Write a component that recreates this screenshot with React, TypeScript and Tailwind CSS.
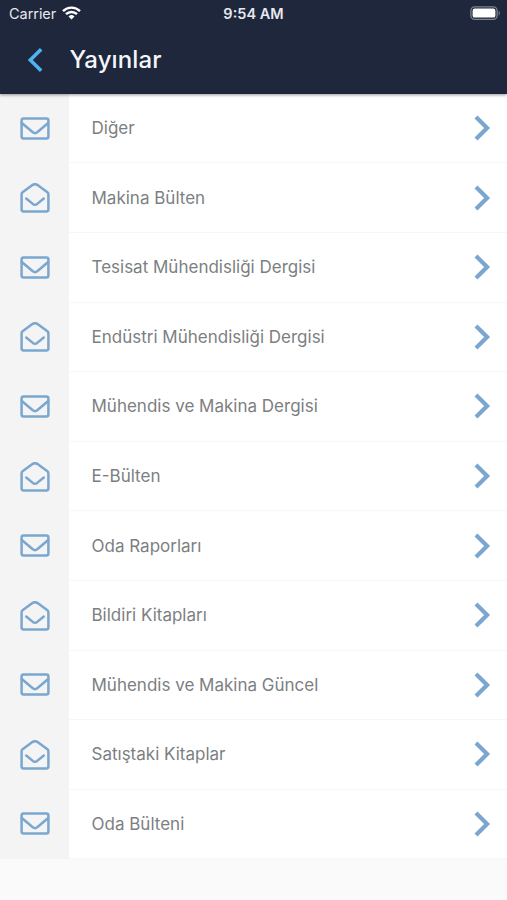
import { useState } from "react"

const publications = [
  { id: 1, title: "Diğer" },
  { id: 2, title: "Makina Bülten" },
  { id: 3, title: "Tesisat Mühendisliği Dergisi" },
  { id: 4, title: "Endüstri Mühendisliği Dergisi" },
  { id: 5, title: "Mühendis ve Makina Dergisi" },
  { id: 6, title: "E-Bülten" },
  { id: 7, title: "Oda Raporları" },
  { id: 8, title: "Bildiri Kitapları" },
  { id: 9, title: "Mühendis ve Makina Güncel" },
  { id: 10, title: "Satıştaki Kitaplar" },
  { id: 11, title: "Oda Bülteni" },
]

function EnvelopeIcon({ open }: { open: boolean }) {
  return (
    <svg width="30" height="30" viewBox="0 0 30 30" fill="none" stroke="#7aa6cf" strokeWidth="2.5" strokeLinecap="round" strokeLinejoin="round">
      {open ? (
        <>
          <path d="M1.6 11.4c0-.9.3-1.6 1-2.1l9.8-7.2c1.8-1.2 3.4-1.2 5.2 0l9.8 7.2c.7.5 1 1.2 1 2.1v15.1c0 1.2-.7 1.9-1.9 1.9h-23c-1.2 0-1.9-.7-1.9-1.9z" />
          <path d="M6.2 15.5l6.6 5.4c1.6 1.2 2.8 1.2 4.4 0l6.6-5.4" />
        </>
      ) : (
        <>
          <rect x="1.6" y="4.4" width="26.8" height="20" rx="2" />
          <path d="M1.8 9l11 9.3c1.7 1.3 2.7 1.3 4.4 0l11-9.3" />
        </>
      )}
    </svg>
  )
}

function StatusBar() {
  return (
    <div className="grid h-7 grid-cols-3 items-center pl-[9px] pr-[6px] text-[#e6e9f0]">
      <div className="flex items-center gap-[6px] text-[14.5px] tracking-[-0.05px]">
        <span>Carrier</span>
        <svg className="-mt-[2px]" width="19" height="14" viewBox="0 0 19 14" fill="none" stroke="#fff" strokeWidth="2.4">
          <path d="M1 5.1a12.2 12.2 0 0 1 17 0" />
          <path d="M4 8.2a7.8 7.8 0 0 1 11 0" />
          <path d="M9.5 13.6L6.5 10.5a4.3 4.3 0 0 1 6 0z" fill="#fff" stroke="none" />
        </svg>
      </div>
      <span className="pr-[3px] text-center text-[14.5px] font-semibold">9:54 AM</span>
      <svg className="-mt-[2px] justify-self-end" width="31" height="15" viewBox="0 0 31 15">
        <rect x="0.9" y="0.9" width="26.2" height="12.4" rx="3.8" fill="none" stroke="#7d8390" strokeWidth="1.3" />
        <rect x="2.6" y="2.6" width="22.8" height="9" rx="2.2" fill="#fff" />
        <path d="M28.6 5v4.4c1.6-.6 1.6-3.8 0-4.4z" fill="#7d8390" />
      </svg>
    </div>
  )
}

export default function App() {
  const [selected, setSelected] = useState<number | null>(null)

  return (
    <div className="flex h-[900px] w-[507px] flex-col overflow-hidden bg-[#fafafa] font-['Inter','Liberation_Sans',sans-serif]">
      <header className="relative h-[93.8px] shrink-0 bg-[#1e273b] shadow-[0_1px_3px_rgba(0,0,0,0.4)]">
        <StatusBar />
        <div className="flex h-16 items-center pl-[27px]">
          <button aria-label="Geri" onClick={() => setSelected(null)}>
            <svg width="17" height="26" viewBox="0 0 17 26" fill="none" stroke="#4fb3f0" strokeWidth="3.6">
              <path d="M14.2 2.2L3.3 13l10.9 10.8" />
            </svg>
          </button>
          <h1 className="ml-[25.5px] text-[24px] font-medium tracking-[0.1px] text-[#f4f6fa]">Yayınlar</h1>
        </div>
      </header>
      <ul className="shrink-0 bg-white">
        {publications.map((item, index) => (
          <li key={item.id} className="flex h-[69.6px] cursor-pointer last:h-[69px]" aria-current={selected === item.id} onClick={() => setSelected(item.id)}>
            <div className="flex w-[69px] items-center justify-center bg-[#f4f4f4] pl-[1px]">
              <EnvelopeIcon open={index % 2 === 1} />
            </div>
            <div className="flex flex-1 items-center justify-between border-b border-[#f7f7f7] pl-[22.5px] pr-[16px]">
              <span className="pt-[1.5px] text-[17px] text-[#7c7f82]">{item.title}</span>
              <svg width="18" height="28" viewBox="0 0 18 28" fill="none" stroke="#7aa6cf" strokeWidth="4.2">
                <path d="M3 2.9L14.1 14L3 25.1" />
              </svg>
            </div>
          </li>
        ))}
      </ul>
    </div>
  )
}
